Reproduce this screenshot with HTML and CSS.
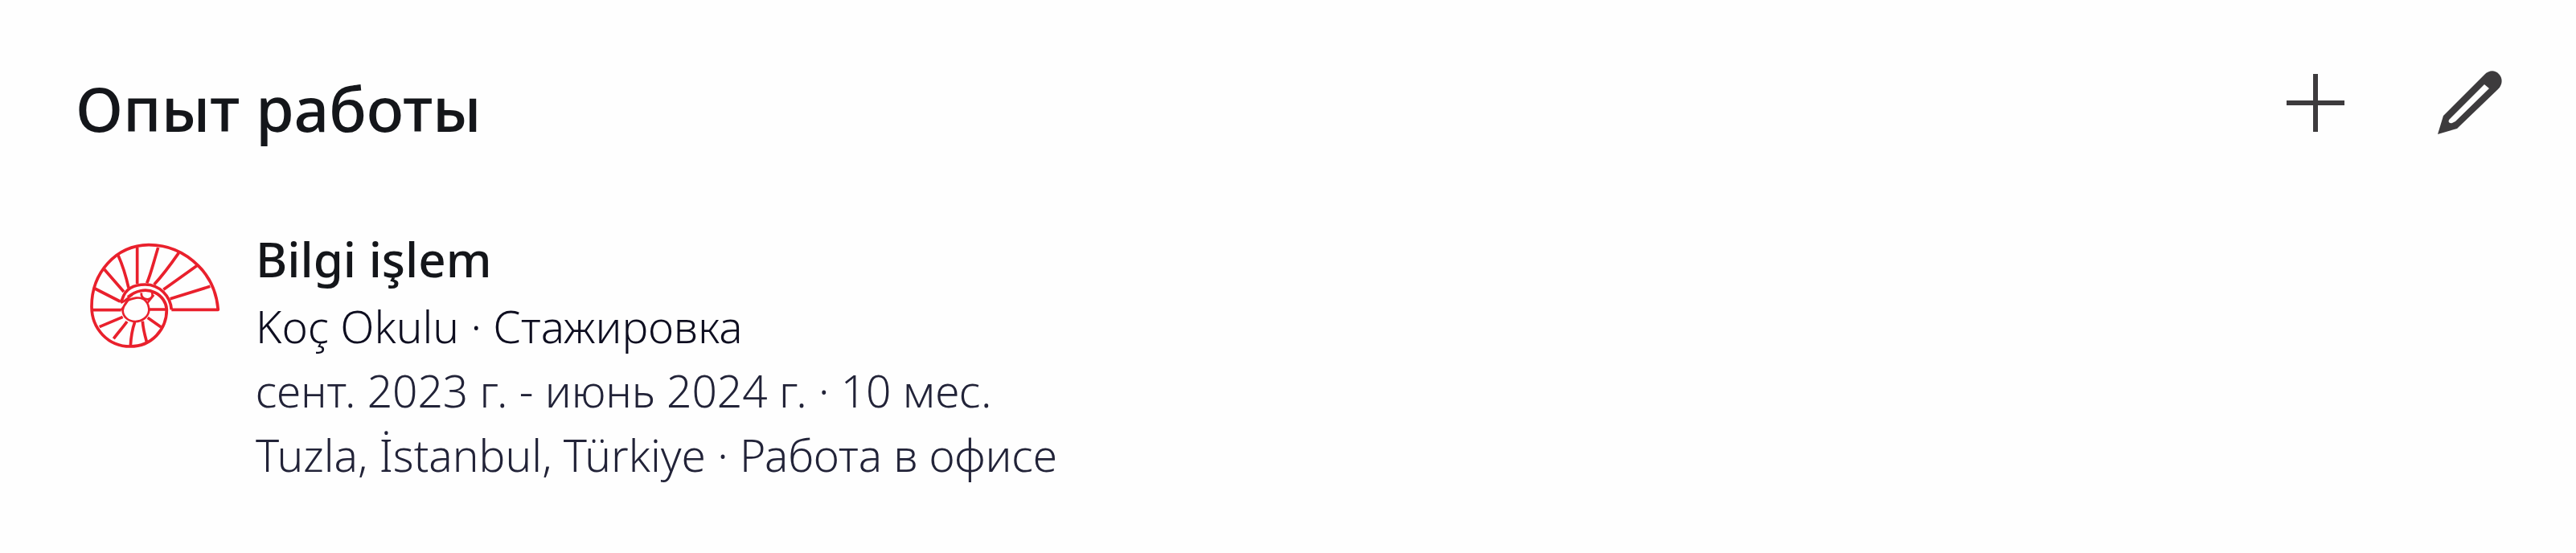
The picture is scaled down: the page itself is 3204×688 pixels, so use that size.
FILE: index.html
```html
<!DOCTYPE html>
<html lang="ru">
<head>
<meta charset="utf-8">
<title>Опыт работы</title>
<link rel="stylesheet" href="styles.css">
</head>
<body>
<section class="card" aria-labelledby="experience-title">
  <header class="card-header">
    <h2 class="card-title" id="experience-title">Опыт работы</h2>
    <div class="actions">
      <button class="icon-button" type="button" aria-label="Добавить">
        <svg class="icon" viewBox="0 0 96 96" aria-hidden="true"><path d="M48 12V84M12 48H84" fill="none" stroke="currentColor" stroke-width="6"/></svg>
      </button>
      <button class="icon-button" type="button" aria-label="Редактировать">
        <svg class="icon" viewBox="0 0 96 96" aria-hidden="true"><path fill="currentColor" fill-rule="evenodd" d="M8 87L15 64L66 13C72 7 79 7 84 12C89 17 89 25 83 31L32 80ZM66 25L23 68C20 71 22 74 26 73L30 71L72 30Z"/></svg>
      </button>
    </div>
  </header>
  <article class="job">
    <svg class="logo" viewBox="60 60 498 408" role="img" aria-label="Koç Okulu">
      <g fill="none" stroke="#e9202c" stroke-width="11" stroke-linejoin="round">
        <path d="M370 316H544C539 258 517 198 470 152C420 102 355 74 285 74C160 76 72 180 72 304C72 388 134 453 216 453C296 453 352 390 352 315C351 290 334 264 308 252C275 235 235 245 207 269" />
        <path d="M370 316C366 265 325 222 272 222C228 222 198 240 187 274L181 290"/>
        <path stroke-width="8" d="M182 318L207 282C215 276 226 274 238 272C270 268 286 292 286 318C284 343 260 360 235 360C208 360 188 341 188 318C190 304 197 292 207 282M181 290C202 282 212 264 225 260"/>
        <path stroke-width="8" d="M258 253C254 268 268 278 282 277C296 275 302 264 297 252M304 261L280 291"/>
        <path d="M242 83V220M320 84C300 150 292 185 278 217M397 104C365 150 335 190 305 222M466 151L340 241M514 229L365 275M171 113C190 155 200 190 210 235M119 165L192 249M84 237L178 285M74 317H182M101 380L188 343M154 424C172 400 190 380 204 360M217 451C219 410 225 385 233 362M278 438C270 410 264 390 262 359M331 381L281 346M286 315H350"/>
      </g>
    </svg>
    <div class="details">
      <h3 class="job-title">Bilgi işlem</h3>
      <p class="line company">Koç Okulu · Стажировка</p>
      <p class="line">сент. 2023 г. - июнь 2024 г. · 10 мес.</p>
      <p class="line">Tuzla, İstanbul, Türkiye · Работа в офисе</p>
    </div>
  </article>
</section>
</body>
</html>
```
FILE: styles.css
```css
body {
  margin: 0;
  background: #fefefe;
  color: #14161a;
  font-family: "Noto Sans", "Open Sans", sans-serif;
}

.card {
  padding: 80px 84px 80px 94px;
}

.card-header {
  display: flex;
  justify-content: space-between;
  align-items: flex-start;
}

.card-title {
  margin: 0;
  font-size: 77px;
  font-weight: 500;
  line-height: 110px;
}

.actions {
  display: flex;
  gap: 96px;
}

.icon-button {
  display: flex;
  padding: 0;
  border: 0;
  background: none;
  color: #3d3b3d;
}

.icon {
  width: 96px;
  height: 96px;
}

.job {
  display: flex;
  gap: 42px;
  padding: 92px 0 0 16px;
}

.logo {
  flex: none;
  width: 166px;
  height: 136px;
  margin-top: 18px;
}

.job-title {
  margin: 0 0 4px;
  font-size: 60px;
  font-weight: 500;
  line-height: 80px;
}

.line {
  margin: 0;
  color: #222338;
  font-size: 55px;
  font-weight: 300;
  line-height: 80px;
}

.company {
  color: #0e0e20;
}
```
